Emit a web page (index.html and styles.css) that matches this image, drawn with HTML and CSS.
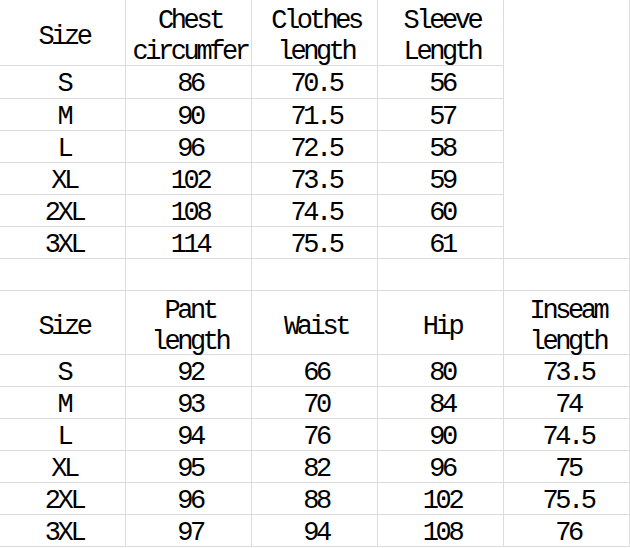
FILE: index.html
```html
<!DOCTYPE html>
<html>
<head>
<meta charset="utf-8">
<link rel="stylesheet" href="styles.css">
</head>
<body>
<div class="sheet">
  <div class="c hd">Size</div>
  <div class="c hd">Chest<br>circumfer</div>
  <div class="c hd">Clothes<br>length</div>
  <div class="c hd">Sleeve<br>Length</div>
  <div class="blank"></div>

  <div class="c">S</div><div class="c">86</div><div class="c">70.5</div><div class="c">56</div>
  <div class="c">M</div><div class="c">90</div><div class="c">71.5</div><div class="c">57</div>
  <div class="c">L</div><div class="c">96</div><div class="c">72.5</div><div class="c">58</div>
  <div class="c">XL</div><div class="c">102</div><div class="c">73.5</div><div class="c">59</div>
  <div class="c">2XL</div><div class="c">108</div><div class="c">74.5</div><div class="c">60</div>
  <div class="c">3XL</div><div class="c">114</div><div class="c">75.5</div><div class="c">61</div>

  <div class="c"></div><div class="c"></div><div class="c"></div><div class="c"></div><div class="c"></div>

  <div class="c hd">Size</div>
  <div class="c hd">Pant<br>length</div>
  <div class="c hd">Waist</div>
  <div class="c hd">Hip</div>
  <div class="c hd">Inseam<br>length</div>

  <div class="c">S</div><div class="c">92</div><div class="c">66</div><div class="c">80</div><div class="c">73.5</div>
  <div class="c">M</div><div class="c">93</div><div class="c">70</div><div class="c">84</div><div class="c">74</div>
  <div class="c">L</div><div class="c">94</div><div class="c">76</div><div class="c">90</div><div class="c">74.5</div>
  <div class="c">XL</div><div class="c">95</div><div class="c">82</div><div class="c">96</div><div class="c">75</div>
  <div class="c">2XL</div><div class="c">96</div><div class="c">88</div><div class="c">102</div><div class="c">75.5</div>
  <div class="c">3XL</div><div class="c">97</div><div class="c">94</div><div class="c">108</div><div class="c">76</div>
</div>
</body>
</html>
```

FILE: styles.css
```css
html, body {
  margin: 0;
  padding: 0;
  background: #ffffff;
}

.sheet {
  display: grid;
  grid-template-columns: repeat(5, 126px);
  grid-template-rows: 66px 33px 32px 32px 32px 32px 32px 32px 64px 32px 32px 32px 32px 32px 32px;
  width: 630px;
  font-family: "Liberation Mono", monospace;
  font-size: 27px;
  letter-spacing: -3.4px;
  color: #000;
}

.c {
  box-sizing: border-box;
  border-right: 1px solid #dcdcdc;
  border-bottom: 1px solid #dcdcdc;
  display: flex;
  align-items: center;
  justify-content: center;
  text-align: center;
  line-height: 31px;
  padding-top: 5px;
  padding-left: 3px;
  white-space: nowrap;
}

.hd {
  padding-top: 9px;
}

.blank {
  grid-column: 5;
  grid-row: 1 / span 7;
  box-sizing: border-box;
  border-right: 1px solid #dcdcdc;
  border-bottom: 1px solid #dcdcdc;
}
```
